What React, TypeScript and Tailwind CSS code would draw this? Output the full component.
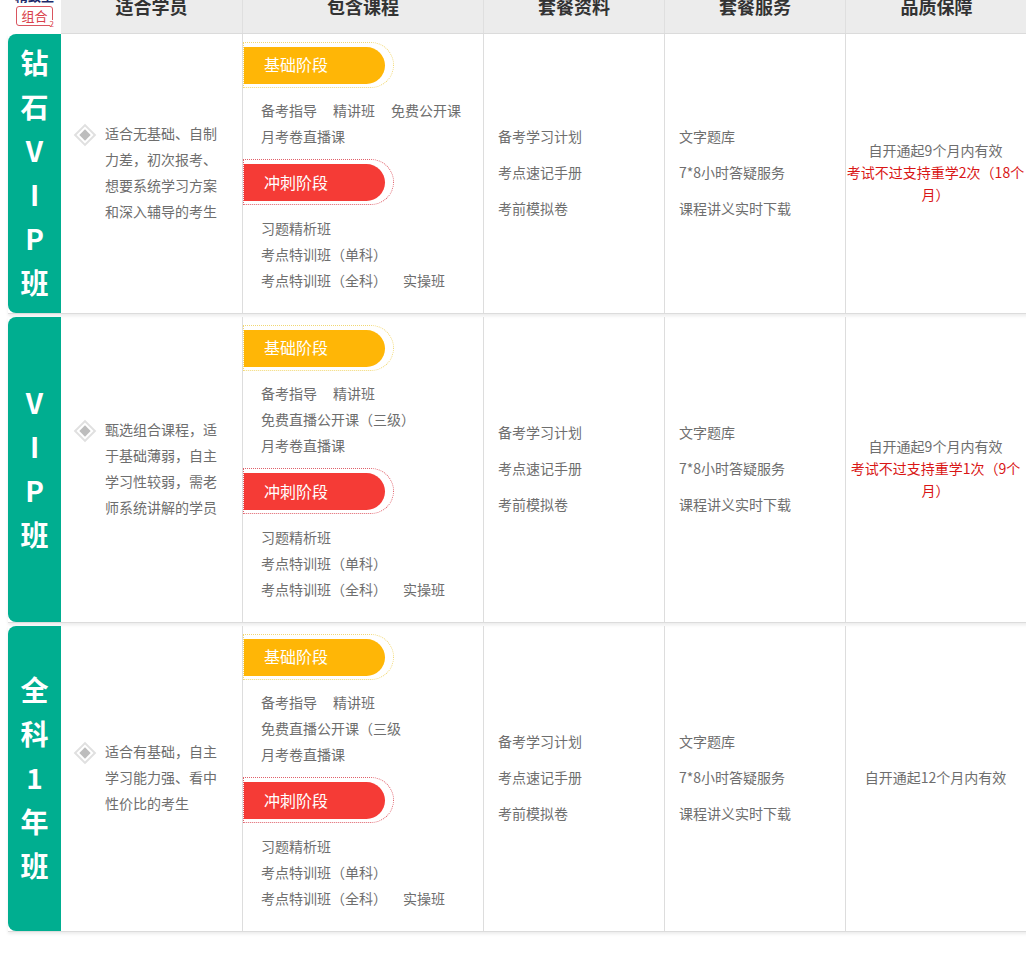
const font = "font-['Microsoft_YaHei','Noto_Sans_CJK_SC','Liberation_Sans',sans-serif]";

type RowData = {
  label: string[];
  desc: string;
  basic: string[];
  note: string;
  red?: string;
  h: string;
};

const rows: RowData[] = [
  {
    label: ["钻", "石", "V", "I", "P", "班"],
    desc: "适合无基础、自制力差，初次报考、想要系统学习方案和深入辅导的考生",
    basic: ["备考指导", "精讲班", "免费公开课", "月考卷直播课"],
    note: "自开通起9个月内有效",
    red: "考试不过支持重学2次（18个月）",
    h: "h-[280px]",
  },
  {
    label: ["V", "I", "P", "班"],
    desc: "甄选组合课程，适于基础薄弱，自主学习性较弱，需老师系统讲解的学员",
    basic: ["备考指导", "精讲班", "免费直播公开课（三级）", "月考卷直播课"],
    note: "自开通起9个月内有效",
    red: "考试不过支持重学1次（9个月）",
    h: "h-[306px]",
  },
  {
    label: ["全", "科", "1", "年", "班"],
    desc: "适合有基础，自主学习能力强、看中性价比的考生",
    basic: ["备考指导", "精讲班", "免费直播公开课（三级", "月考卷直播课"],
    note: "自开通起12个月内有效",
    h: "h-[306px]",
  },
];

function Pill({ text, red }: { text: string; red?: boolean }) {
  return (
    <div
      className={`w-[151px] h-[46px] border border-dotted rounded-r-[23px] flex items-center ${
        red ? "border-[#e0606a]" : "border-[#f2d873]"
      }`}
    >
      <div
        className={`w-[141px] h-[37px] rounded-r-[19px] pl-[20px] text-[16px] text-white ${
          red ? "bg-[#f53b36] leading-[37px]" : "bg-[#ffb606] leading-[35px]"
        }`}
      >
        {text}
      </div>
    </div>
  );
}

function Courses({ items, pb }: { items: string[]; pb: string }) {
  return (
    <div className={`pl-[18px] pt-[9px] ${pb} flex flex-wrap gap-x-4 text-[14px] leading-[26px] text-[#6e6e6e]`}>
      {items.map((c) => (
        <span key={c} className="whitespace-nowrap">
          {c}
        </span>
      ))}
    </div>
  );
}

function Sprint() {
  return (
    <div className="pl-[18px] pt-[10px] text-[14px] leading-[26px] text-[#6e6e6e]">
      <div>习题精析班</div>
      <div>考点特训班（单科）</div>
      <div className="flex gap-x-4">
        <span>考点特训班（全科）</span>
        <span>实操班</span>
      </div>
    </div>
  );
}

function Row({ r }: { r: RowData }) {
  return (
    <div className={`flex ${r.h} border-b border-[#dcdcdc] shadow-[0_2px_3px_rgba(0,0,0,0.08)]`}>
      <div className="w-[53px] shrink-0 bg-[#00ae90] rounded-l-[8px] pb-[3px] text-white font-bold text-[28px] leading-[44px] flex flex-col items-center justify-center">
        {r.label.map((l, i) => (
          <span key={i}>{l}</span>
        ))}
      </div>
      <div className="w-[182px] shrink-0 border-r border-[#dddddd] flex items-center pl-[13px] pb-[4px]">
        <div className="flex items-start">
          <div className="w-[22px] h-[22px] mt-[4px] shrink-0 flex items-center justify-center">
            <div className="w-[16px] h-[16px] rotate-45 border-2 border-[#e0e0e0] flex items-center justify-center">
              <div className="w-[8px] h-[8px] bg-[#bdbdbd]" />
            </div>
          </div>
          <p className="w-[113px] ml-[9px] text-[14px] leading-[26px] text-[#6e6e6e]">{r.desc}</p>
        </div>
      </div>
      <div className="w-[241px] shrink-0 border-r border-[#dddddd] pt-[8px]">
        <Pill text="基础阶段" />
        <Courses items={r.basic} pb="pb-[10px]" />
        <Pill text="冲刺阶段" red />
        <Sprint />
      </div>
      <div className="w-[181px] shrink-0 border-r border-[#dddddd] flex flex-col justify-center pl-[14px] pb-[4px] text-[14px] leading-[36px] text-[#6e6e6e]">
        <span>备考学习计划</span>
        <span>考点速记手册</span>
        <span>考前模拟卷</span>
      </div>
      <div className="w-[181px] shrink-0 border-r border-[#dddddd] flex flex-col justify-center pl-[14px] pb-[4px] text-[14px] leading-[36px] text-[#6e6e6e]">
        <span>文字题库</span>
        <span>7*8小时答疑服务</span>
        <span>课程讲义实时下载</span>
      </div>
      <div className="w-[181px] shrink-0 flex flex-col justify-center text-center pr-[2px] pb-[4px] text-[14px] leading-[22px] text-[#6e6e6e]">
        <span>{r.note}</span>
        {r.red && <span className="text-[#d91616]">{r.red}</span>}
      </div>
    </div>
  );
}

export default function App() {
  return (
    <div className={`w-[1026px] h-[963px] overflow-hidden bg-white ${font}`}>
      <div className="w-[1100px] -mt-[21px] pl-[8px]">
        <div className="flex h-[55px]">
          <div className="w-[53px] shrink-0 flex flex-col items-center justify-end pb-[8px]">
            <span className="text-[13px] leading-[14px] font-bold text-[#1d2a6b] whitespace-nowrap">精致至</span>
            <span className="relative mt-[3px] w-[37px] h-[20px] border border-[#d9555f] rounded-[3px] text-[13px] leading-[18px] text-center text-[#d9404a]">
              组合
              <span className="absolute -right-[2px] -bottom-[3px] bg-white text-[8px] leading-[8px] text-[#d9404a]">2</span>
            </span>
          </div>
          <div className="flex bg-[#ececec] border-b border-[#dcdcdc] text-[18px] font-bold text-[#333] text-center leading-[54px]">
            <div className="w-[182px] border-r border-[#dfdfdf]">适合学员</div>
            <div className="w-[241px] border-r border-[#dfdfdf]">包含课程</div>
            <div className="w-[181px] border-r border-[#dfdfdf]">套餐资料</div>
            <div className="w-[181px] border-r border-[#dfdfdf]">套餐服务</div>
            <div className="w-[181px]">品质保障</div>
          </div>
        </div>
        <div className="flex flex-col gap-[3px]">
          {rows.map((r) => (
            <Row key={r.label.join("")} r={r} />
          ))}
        </div>
      </div>
    </div>
  );
}
